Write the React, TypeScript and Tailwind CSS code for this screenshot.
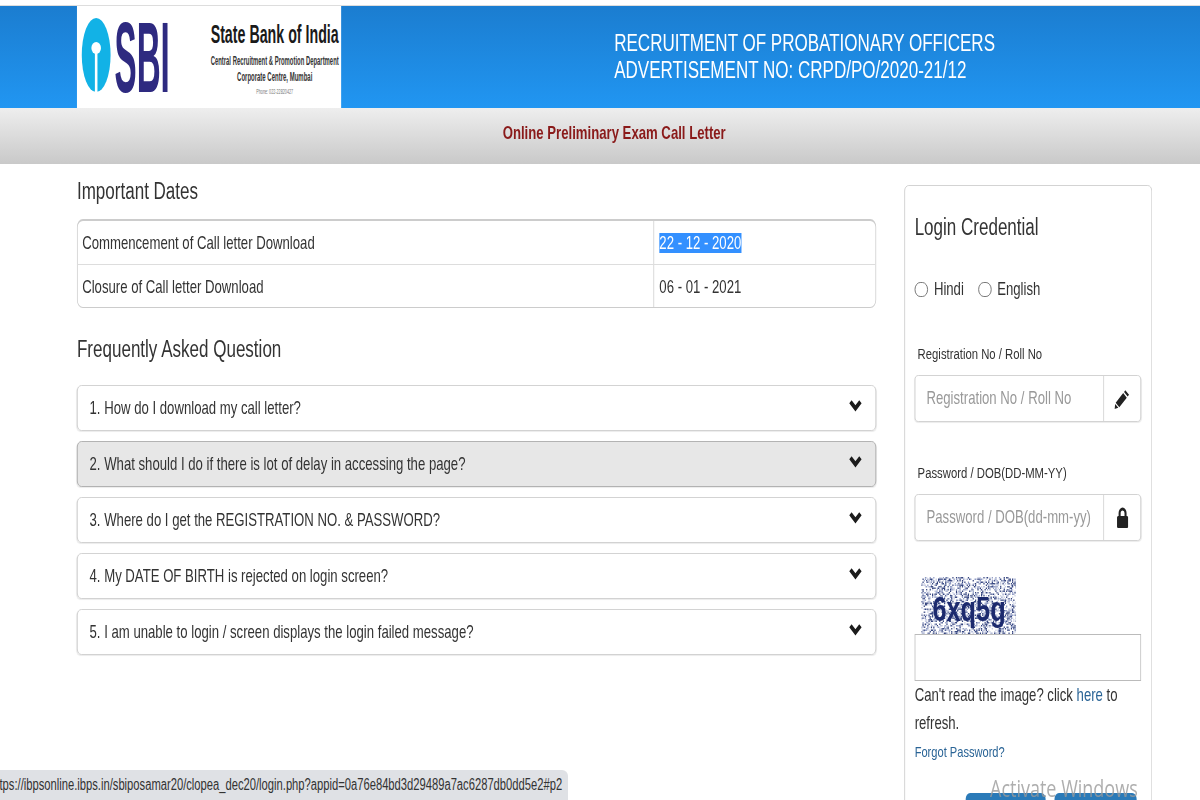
const faqs = [
  "1. How do I download my call letter?",
  "2. What should I do if there is lot of delay in accessing the page?",
  "3. Where do I get the REGISTRATION NO. & PASSWORD?",
  "4. My DATE OF BIRTH is rejected on login screen?",
  "5. I am unable to login / screen displays the login failed message?",
];

// speckle behind the captcha, seeded so it stays the same on every load
const speckle: { x: number; y: number; c: string }[] = [];
let seed = 41;
for (let y = 0; y < 57; y += 1.5) {
  for (let x = 0; x < 119; x += 1.5) {
    seed = (seed * 16807) % 2147483647;
    const n = seed % 100;
    if (n < 50) speckle.push({ x, y, c: n < 20 ? "#34447f" : n < 36 ? "#8f9bc4" : "#c9cee2" });
  }
}

const Chevron = () => (
  <svg viewBox="0 0 16 12" preserveAspectRatio="none" className="w-[18px] h-[13px] shrink-0 mb-1.5">
    <path d="M2 2.6 L8 8.6 L14 2.6" fill="none" stroke="#1c1c1c" strokeWidth="4" />
  </svg>
);

const Logo = () => (
  <div className="w-[357px] h-[102px] bg-white shrink-0">
    <svg viewBox="0 0 330 102" preserveAspectRatio="none" className="w-[357px] h-[102px]">
      <ellipse cx="24" cy="49" rx="18" ry="37" fill="#12b2e6" />
      <circle cx="24" cy="42" r="6" fill="white" />
      <rect x="22.4" y="44" width="3.2" height="42" fill="white" />
      <text x="47" y="86" fontFamily="Liberation Sans" fontWeight="700" fontSize="100" textLength="69" lengthAdjust="spacingAndGlyphs" fill="#2e2a80">SBI</text>
      <text x="167" y="37" fontFamily="Liberation Sans" fontWeight="700" fontSize="25" textLength="160" lengthAdjust="spacingAndGlyphs" fill="#1a1a1a">State Bank of India</text>
      <text x="167" y="59" fontFamily="Liberation Sans" fontSize="12" fontWeight="700" textLength="160" lengthAdjust="spacingAndGlyphs" fill="#333333">Central Recruitment &amp; Promotion Department</text>
      <text x="200" y="75" fontFamily="Liberation Sans" fontSize="12" fontWeight="700" textLength="94" lengthAdjust="spacingAndGlyphs" fill="#333333">Corporate Centre, Mumbai</text>
      <text x="224" y="88" fontFamily="Liberation Sans" fontSize="7" textLength="46" lengthAdjust="spacingAndGlyphs" fill="#777777">Phone: 022-22820427</text>
    </svg>
  </div>
);

const App = () => {
  return (
    <div className="relative w-[1200px] h-[800px] overflow-hidden bg-white">
      {/* the source page is squeezed sideways in the shot, so everything inside is in unsqueezed units */}
      <div className="w-[1622px] origin-top-left scale-x-[0.74] font-['Liberation_Sans',Arial,sans-serif] text-[#333333]">
        <div className="h-[6px] bg-white border-b border-[#dddddd]" />
        <header className="h-[102px] pl-[104px] flex bg-gradient-to-b from-[#1b7dd0] to-[#2196f2]">
          <Logo />
          <div className="ml-[369px] pt-[24px] text-white text-[23px] leading-[27px]">
            <p>RECRUITMENT OF PROBATIONARY OFFICERS</p>
            <p>ADVERTISEMENT NO: CRPD/PO/2020-21/12</p>
          </div>
        </header>
        <div className="h-[56px] flex items-center justify-center pb-1.5 bg-gradient-to-b from-[#eeeeee] to-[#c9c9c9]">
          <p className="ml-[38px] text-[17.8px] font-bold text-[#8a1a1a]">Online Preliminary Exam Call Letter</p>
        </div>

        <main className="flex pl-[104px] pt-[21px] gap-[38px]">
          <section className="w-[1080px]">
            <h2 className="text-[23px] leading-[24px] mt-[-6px] mb-[16px]">Important Dates</h2>
            <div className="border border-t-2 border-[#cccccc] rounded-[8px] text-[17.8px]">
              <div className="flex h-[44px] items-center border-b border-[#dddddd]">
                <div className="w-[779px] h-full flex items-center pl-[6px] pt-[2px] border-r border-[#cccccc]">Commencement of Call letter Download</div>
                <div className="pl-[7px] pt-[2px]">
                  <span className="bg-[#3390ff] text-white">22 - 12 - 2020</span>
                </div>
              </div>
              <div className="flex h-[42px] items-center">
                <div className="w-[779px] h-full flex items-center pl-[6px] pt-[2px] border-r border-[#cccccc]">Closure of Call letter Download</div>
                <div className="pl-[7px] pt-[2px]">06 - 01 - 2021</div>
              </div>
            </div>

            <h2 className="text-[23px] leading-[24px] mt-[29px] mb-[24px]">Frequently Asked Question</h2>
            <div className="flex flex-col gap-[10px]">
              {faqs.map((q, i) => (
                <div
                  key={q}
                  className={`h-[46px] flex items-center justify-between pl-[16px] pr-[18px] border rounded-[6px] text-[17.8px] shadow-[0_1px_1px_rgba(0,0,0,0.08)] ${
                    i === 1 ? "bg-[#e7e7e7] border-[#aaaaaa]" : "bg-white border-[#cccccc]"
                  }`}
                >
                  <span>{q}</span>
                  <Chevron />
                </div>
              ))}
            </div>
          </section>

          <aside className="w-[335px] h-[700px] border border-[#cccccc] rounded-[6px] pl-[13px] pr-[14px] pt-[26px]">
            <h3 className="text-[23px] leading-[30px]">Login Credential</h3>
            <div className="flex items-center mt-[35px] text-[17.8px] leading-[24px]">
              <span className="w-[18px] h-[15px] rounded-full border border-[#666666]" />
              <span className="ml-[8px]">Hindi</span>
              <span className="ml-[19px] w-[18px] h-[15px] rounded-full border border-[#666666]" />
              <span className="ml-[8px]">English</span>
            </div>

            <label className="block mt-[43px] ml-[4px] text-[15.3px] leading-[20px]">Registration No / Roll No</label>
            <div className="flex h-[47px] mt-[11px] border border-[#cccccc] rounded-[5px] text-[17.8px] shadow-[0_1px_1px_rgba(0,0,0,0.08)]">
              <div className="w-[255px] flex items-center pl-[15px] border-r border-[#cccccc] text-[#999999]">Registration No / Roll No</div>
              <div className="flex-1 flex items-center justify-center">
                <svg viewBox="0 0 16 16" preserveAspectRatio="none" className="w-[21px] h-[20px]">
                  <path d="M11.2 1 L15 4.6 L13.6 6 L9.9 2.3 Z M9 3.2 L12.7 6.9 L5 14.6 L1.3 11 Z M.8 12 L4 15 L0 16 Z" fill="#222222" />
                </svg>
              </div>
            </div>

            <label className="block mt-[41px] ml-[4px] text-[15.3px] leading-[20px]">Password / DOB(DD-MM-YY)</label>
            <div className="flex h-[47px] mt-[11px] border border-[#cccccc] rounded-[5px] text-[17.8px] shadow-[0_1px_1px_rgba(0,0,0,0.08)]">
              <div className="w-[255px] flex items-center pl-[15px] border-r border-[#cccccc] text-[#999999] whitespace-nowrap">Password / DOB(dd-mm-yy)</div>
              <div className="flex-1 flex items-center justify-center">
                <svg viewBox="0 0 16 21" className="w-[16px] h-[21px]">
                  <path d="M4 10 V6 a4 4 0 0 1 8 0 V10" fill="none" stroke="#222222" strokeWidth="2.8" />
                  <rect x="0.5" y="9" width="15" height="12" rx="1.5" fill="#222222" />
                </svg>
              </div>
            </div>

            <div className="mt-[36px] ml-[9px] w-[128px] h-[57px]">
              <svg viewBox="0 0 119 57" preserveAspectRatio="none" className="w-[128px] h-[57px]">
                {speckle.map((s) => (
                  <rect key={`${s.x}-${s.y}`} x={s.x} y={s.y} width="1.5" height="1.5" fill={s.c} />
                ))}
                <text x="14" y="44" fontFamily="Liberation Sans" fontWeight="700" fontSize="36" textLength="92" lengthAdjust="spacingAndGlyphs" fill="#1c2a6e">6xq5g</text>
              </svg>
            </div>
            <div className="h-[47px] border border-[#bbbbbb]" />
            <p className="text-[17.8px] leading-[28px]">
              Can't read the image? click <span className="text-[#2a6496]">here</span> to refresh.
            </p>
            <p className="text-[15px] leading-[20px] mt-[5px] text-[#2a6496]">Forgot Password?</p>
            <div className="flex gap-[12px] mt-[31px] ml-[69px]">
              <div className="w-[108px] h-[30px] rounded-[6px] bg-[#2a7ab8]" />
              <div className="w-[111px] h-[30px] rounded-[6px] bg-[#2a7ab8]" />
            </div>
          </aside>
        </main>
      </div>

      <div className="absolute left-0 bottom-0 w-[568px] h-[30px] rounded-tr-[6px] bg-[#dfe1e5] overflow-hidden flex items-center justify-end pr-[6px]">
        <span className="whitespace-nowrap origin-right scale-x-[0.7] font-['Liberation_Sans',Arial,sans-serif] text-[16px] text-[#333333]">
          https://ibpsonline.ibps.in/sbiposamar20/clopea_dec20/login.php?appid=0a76e84bd3d29489a7ac6287db0dd5e2#p2
        </span>
      </div>
      <div className="absolute left-[990px] top-[773px] origin-top-left scale-x-[0.75] whitespace-nowrap font-['Open_Sans',sans-serif] text-[24px] leading-[30px] text-[#9a9a9a]/80">
        Activate Windows
      </div>
    </div>
  );
};

export default App;
